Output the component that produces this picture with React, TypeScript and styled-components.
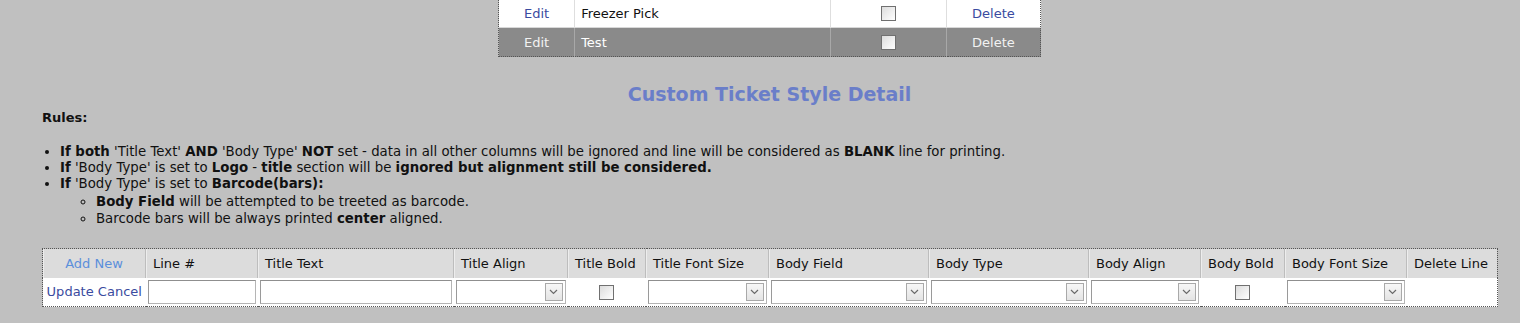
import React from "react";
import styled, { createGlobalStyle } from "styled-components";

const GlobalStyle = createGlobalStyle`
  html, body {
    margin: 0;
    padding: 0;
    background: #c0c0c0;
  }
  body {
    font-family: "DejaVu Sans", Verdana, sans-serif;
    font-size: 13px;
    color: #111;
  }
`;

const Page = styled.div`
  width: 1455px;
  margin-left: 42px;
`;

const StyleTable = styled.table`
  margin: -2px auto 0 auto;
  width: 543px;
  border-collapse: collapse;
  table-layout: fixed;
  border-left: 1px dotted #555;
  border-right: 1px dotted #555;
  border-bottom: 1px dotted #555;
`;

const StyleRow = styled.tr<{ $selected?: boolean }>`
  height: 29px;
  background: ${(p) => (p.$selected ? "#8a8a8a" : "#ffffff")};
  color: ${(p) => (p.$selected ? "#ffffff" : "#111")};
  border-top: 1px solid ${(p) => (p.$selected ? "#d8d8d8" : "#e4e4e4")};
`;

const StyleCell = styled.td<{ $align?: string; $selected?: boolean }>`
  padding: 0 6px;
  text-align: ${(p) => p.$align || "left"};
  border-left: 1px solid ${(p) => (p.$selected ? "#a8a8a8" : "#dedede")};
  &:first-child {
    border-left: none;
  }
`;

const Link = styled.a<{ $light?: boolean; $selected?: boolean }>`
  color: ${(p) => (p.$selected ? "#f2f2f2" : p.$light ? "#5b8fdb" : "#3a4ba0")};
  text-decoration: none;
  cursor: pointer;
`;

const Box = styled.span`
  display: inline-block;
  width: 13px;
  height: 13px;
  border: 1px solid #707070;
  background: linear-gradient(135deg, #dcdcdc 0%, #ffffff 100%);
  vertical-align: middle;
`;

const Heading = styled.h2`
  margin: 26px 0 0 0;
  text-align: center;
  font-size: 19px;
  font-weight: bold;
  color: #6a7ec9;
  line-height: 22px;
`;

const RulesLabel = styled.div`
  margin-top: 5px;
  font-weight: bold;
  line-height: 16px;
`;

const RuleList = styled.ul`
  margin: 18px 0 0 0;
  padding-left: 18px;
  font-size: 13.3px;
  line-height: 16px;
  list-style: disc;
`;

const SubList = styled.ul`
  margin: 1px 0 0 0;
  padding-left: 36px;
  list-style: circle;
  line-height: 17px;
`;

const LineTable = styled.table`
  margin-top: 21px;
  width: 1455px;
  border-collapse: collapse;
  table-layout: fixed;
  border: 1px dotted #555;
`;

const Col = styled.col<{ $w: number }>`
  width: ${(p) => p.$w}px;
`;

const HeadRow = styled.tr`
  height: 29px;
  background: #dcdcdc;
`;

const HeadCell = styled.th<{ $center?: boolean }>`
  padding: 0 7px;
  font-weight: normal;
  text-align: ${(p) => (p.$center ? "center" : "left")};
  white-space: nowrap;
  overflow: hidden;
  border-left: 1px solid #bdbdbd;
  box-shadow: inset 1px 0 0 #ededed;
  &:first-child {
    border-left: none;
  }
`;

const EditRow = styled.tr`
  height: 29px;
  background: #ffffff;
`;

const EditCell = styled.td<{ $center?: boolean }>`
  padding: 0 2px;
  text-align: ${(p) => (p.$center ? "center" : "left")};
  white-space: nowrap;
`;

const TextInput = styled.input`
  box-sizing: border-box;
  width: 100%;
  height: 24px;
  margin: 0;
  border: 1px solid #b5b5b5;
  border-top-color: #8f8f8f;
  border-left-color: #9a9a9a;
  background: #fff;
  font: inherit;
`;

const SelectBox = styled.div`
  box-sizing: border-box;
  width: 100%;
  height: 24px;
  display: flex;
  align-items: center;
  justify-content: flex-end;
  padding-right: 2px;
  border: 1px solid #b5b5b5;
  border-top-color: #8f8f8f;
  border-left-color: #9a9a9a;
  background: #fff;
`;

const SelectButton = styled.span`
  box-sizing: border-box;
  width: 18px;
  height: 18px;
  display: flex;
  align-items: center;
  justify-content: center;
  border: 1px solid #a9a9a9;
  background: linear-gradient(#f7f7f7, #e4e4e4);
`;

const Chevron = () => (
  <svg width="9" height="6" viewBox="0 0 9 6">
    <path d="M1 1 L4.5 4.5 L8 1" fill="none" stroke="#6a6a6a" strokeWidth="1.2" />
  </svg>
);

const Select = () => (
  <SelectBox>
    <SelectButton>
      <Chevron />
    </SelectButton>
  </SelectBox>
);

const styles = [
  { name: "Freezer Pick", selected: false },
  { name: "Test", selected: true },
];

const columns = [
  { label: "Add New", w: 103 },
  { label: "Line #", w: 112 },
  { label: "Title Text", w: 196 },
  { label: "Title Align", w: 114 },
  { label: "Title Bold", w: 78 },
  { label: "Title Font Size", w: 123 },
  { label: "Body Field", w: 160 },
  { label: "Body Type", w: 160 },
  { label: "Body Align", w: 112 },
  { label: "Body Bold", w: 84 },
  { label: "Body Font Size", w: 122 },
  { label: "Delete Line", w: 91 },
];

const App = () => {
  return (
    <Page>
      <GlobalStyle />
      <StyleTable>
        <colgroup>
          <Col $w={76} />
          <Col $w={255} />
          <Col $w={116} />
          <Col $w={94} />
        </colgroup>
        <tbody>
          {styles.map((s) => (
            <StyleRow key={s.name} $selected={s.selected}>
              <StyleCell $align="center" $selected={s.selected}>
                <Link $selected={s.selected}>Edit</Link>
              </StyleCell>
              <StyleCell $selected={s.selected}>{s.name}</StyleCell>
              <StyleCell $align="center" $selected={s.selected}>
                <Box />
              </StyleCell>
              <StyleCell $align="center" $selected={s.selected}>
                <Link $selected={s.selected}>Delete</Link>
              </StyleCell>
            </StyleRow>
          ))}
        </tbody>
      </StyleTable>

      <Heading>Custom Ticket Style Detail</Heading>

      <RulesLabel>Rules:</RulesLabel>
      <RuleList>
        <li>
          <b>If both</b> 'Title Text' <b>AND</b> 'Body Type' <b>NOT</b> set - data in all other
          columns will be ignored and line will be considered as <b>BLANK</b> line for printing.
        </li>
        <li>
          <b>If</b> 'Body Type' is set to <b>Logo</b> - <b>title</b> section will be{" "}
          <b>ignored but alignment still be considered.</b>
        </li>
        <li>
          <b>If</b> 'Body Type' is set to <b>Barcode(bars):</b>
          <SubList>
            <li>
              <b>Body Field</b> will be attempted to be treeted as barcode.
            </li>
            <li>
              Barcode bars will be always printed <b>center</b> aligned.
            </li>
          </SubList>
        </li>
      </RuleList>

      <LineTable>
        <colgroup>
          {columns.map((c) => (
            <Col key={c.label} $w={c.w} />
          ))}
        </colgroup>
        <thead>
          <HeadRow>
            {columns.map((c, i) =>
              i === 0 ? (
                <HeadCell key={c.label} $center>
                  <Link $light>{c.label}</Link>
                </HeadCell>
              ) : (
                <HeadCell key={c.label}>{c.label}</HeadCell>
              )
            )}
          </HeadRow>
        </thead>
        <tbody>
          <EditRow>
            <EditCell $center>
              <Link>Update</Link> <Link>Cancel</Link>
            </EditCell>
            <EditCell>
              <TextInput />
            </EditCell>
            <EditCell>
              <TextInput />
            </EditCell>
            <EditCell>
              <Select />
            </EditCell>
            <EditCell $center>
              <Box />
            </EditCell>
            <EditCell>
              <Select />
            </EditCell>
            <EditCell>
              <Select />
            </EditCell>
            <EditCell>
              <Select />
            </EditCell>
            <EditCell>
              <Select />
            </EditCell>
            <EditCell $center>
              <Box />
            </EditCell>
            <EditCell>
              <Select />
            </EditCell>
            <EditCell />
          </EditRow>
        </tbody>
      </LineTable>
    </Page>
  );
};

export default App;
